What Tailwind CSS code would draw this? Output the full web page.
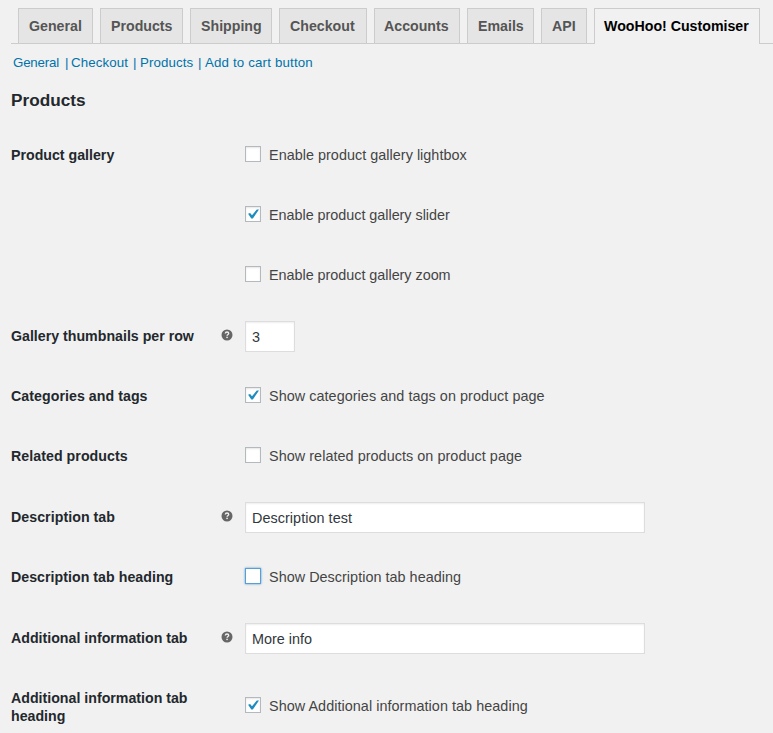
<!DOCTYPE html>
<html lang="en">
<head>
<meta charset="utf-8">
<title>Settings</title>
<script src="https://cdn.jsdelivr.net/npm/@tailwindcss/browser@4"></script>
</head>
<body class="h-[733px] overflow-hidden bg-[#f1f1f1] font-['Liberation_Sans',Arial,sans-serif] text-[14.4px] leading-[21px] text-[#444]">
<svg class="hidden">
  <symbol id="check" viewBox="0 0 14 14"><path d="M2.1 6.7 L4.1 6 L6 8.3 L10.8 2.4 L13 2.6 L6.8 11.6 L5.3 11.6 Z" fill="#1e8cbe"/></symbol>
  <symbol id="help" viewBox="0 0 12 12"><circle cx="6" cy="6" r="5.5" fill="#666"/><path d="M4.3 4.5C4.4 3.4 5.1 3 6 3s1.7.5 1.7 1.4c0 1.1-1.6 1.1-1.6 2.4" fill="none" stroke="#f1f1f1" stroke-width="1.4"/><rect x="5.3" y="7.7" width="1.5" height="1.4" fill="#f1f1f1"/></symbol>
</svg>
<nav class="ml-[11px] flex h-[44px] items-end border-b border-[#ccc] pl-[7px] text-[14.2px] font-bold leading-[34px] whitespace-nowrap text-[#555]">
  <a class="mr-[7px] h-[35px] w-[75px] border border-b-0 border-[#ccc] bg-[#e5e5e5] pl-[10px]">General</a>
  <a class="mr-[7px] h-[35px] w-[83px] border border-b-0 border-[#ccc] bg-[#e5e5e5] pl-[10px]">Products</a>
  <a class="mr-[7px] h-[35px] w-[82px] border border-b-0 border-[#ccc] bg-[#e5e5e5] pl-[10px]">Shipping</a>
  <a class="mr-[7px] h-[35px] w-[88px] border border-b-0 border-[#ccc] bg-[#e5e5e5] pl-[10px]">Checkout</a>
  <a class="mr-[7px] h-[35px] w-[86px] border border-b-0 border-[#ccc] bg-[#e5e5e5] pl-[9px]">Accounts</a>
  <a class="mr-[7px] h-[35px] w-[67px] border border-b-0 border-[#ccc] bg-[#e5e5e5] pl-[10px]">Emails</a>
  <a class="mr-[7px] h-[35px] w-[46px] border border-b-0 border-[#ccc] bg-[#e5e5e5] pl-[10px]">API</a>
  <a class="-mb-px h-[36px] w-[166px] border border-b-0 border-[#ccc] bg-[#f1f1f1] pl-[9px] text-black">WooHoo! Customiser</a>
</nav>
<div class="flex h-[36px] pl-[13px] text-[13.3px] leading-[37px] whitespace-nowrap text-[#0073aa]">
  <a class="w-[52px] tracking-[-0.2px]">General</a><span class="w-[6px]">|</span><a class="w-[62px] tracking-[0.1px]">Checkout</a><span class="w-[7px]">|</span><a class="w-[58px] tracking-[0.1px]">Products</a><span class="w-[7px]">|</span><a class="tracking-[0.16px]">Add to cart button</a>
</div>
<h2 class="h-[45px] pl-[11px] text-[17.2px] font-bold leading-[41px] text-[#23282d]">Products</h2>
<main class="pl-[11px]">
  <div class="flex h-[60px] items-center">
    <div class="w-[234px] text-[14.2px] font-bold text-[#23282d]">Product gallery</div>
    <span class="-mt-[2px] mr-[8px] size-[16px] border border-[#b4b9be] bg-white shadow-[inset_0_1px_2px_rgba(0,0,0,0.1)]"></span><span class="tracking-[0.03px]">Enable product gallery lightbox</span>
  </div>
  <div class="flex h-[60px] items-center pl-[234px]">
    <span class="-mt-[2px] mr-[8px] size-[16px] border border-[#b4b9be] bg-white shadow-[inset_0_1px_2px_rgba(0,0,0,0.1)]"><svg class="size-[14px]"><use href="#check"/></svg></span><span class="tracking-[-0.03px]">Enable product gallery slider</span>
  </div>
  <div class="flex h-[60px] items-center pl-[234px]">
    <span class="-mt-[2px] mr-[8px] size-[16px] border border-[#b4b9be] bg-white shadow-[inset_0_1px_2px_rgba(0,0,0,0.1)]"></span><span class="tracking-[-0.03px]">Enable product gallery zoom</span>
  </div>
  <div class="flex h-[61px] items-center">
    <div class="mt-px w-[210px] text-[14.2px] font-bold text-[#23282d]">Gallery thumbnails per row</div>
    <svg class="-mt-px mr-[12px] size-[12px]"><use href="#help"/></svg>
    <div class="mt-[2px] h-[31px] w-[50px] border border-[#ddd] bg-white pl-[6px] leading-[30px] text-[#32373c] shadow-[inset_0_1px_2px_rgba(0,0,0,0.07)]">3</div>
  </div>
  <div class="flex h-[60px] items-center">
    <div class="w-[234px] text-[14.2px] font-bold tracking-[0.05px] text-[#23282d]">Categories and tags</div>
    <span class="-mt-[2px] mr-[8px] size-[16px] border border-[#b4b9be] bg-white shadow-[inset_0_1px_2px_rgba(0,0,0,0.1)]"><svg class="size-[14px]"><use href="#check"/></svg></span><span class="tracking-[0.05px]">Show categories and tags on product page</span>
  </div>
  <div class="flex h-[60px] items-center">
    <div class="w-[234px] text-[14.2px] font-bold tracking-[0.05px] text-[#23282d]">Related products</div>
    <span class="-mt-[2px] mr-[8px] size-[16px] border border-[#b4b9be] bg-white shadow-[inset_0_1px_2px_rgba(0,0,0,0.1)]"></span><span class="tracking-[0.05px]">Show related products on product page</span>
  </div>
  <div class="flex h-[61px] items-center">
    <div class="mt-px w-[210px] text-[14.2px] font-bold tracking-[0.05px] text-[#23282d]">Description tab</div>
    <svg class="-mt-px mr-[12px] size-[12px]"><use href="#help"/></svg>
    <div class="mt-[2px] h-[31px] w-[400px] border border-[#ddd] bg-white pl-[6px] leading-[30px] tracking-[0.05px] text-[#32373c] shadow-[inset_0_1px_2px_rgba(0,0,0,0.07)]">Description test</div>
  </div>
  <div class="flex h-[60px] items-center">
    <div class="w-[234px] text-[14.2px] font-bold tracking-[0.03px] text-[#23282d]">Description tab heading</div>
    <span class="-mt-[2px] mr-[8px] size-[16px] border border-[#5b9dd9] bg-white shadow-[0_0_2px_rgba(30,140,190,0.8)]"></span><span class="tracking-[0.03px]">Show Description tab heading</span>
  </div>
  <div class="flex h-[61px] items-center">
    <div class="mt-px w-[210px] text-[14.2px] font-bold text-[#23282d]">Additional information tab</div>
    <svg class="-mt-px mr-[12px] size-[12px]"><use href="#help"/></svg>
    <div class="mt-[2px] h-[31px] w-[400px] border border-[#ddd] bg-white pl-[6px] leading-[30px] text-[#32373c] shadow-[inset_0_1px_2px_rgba(0,0,0,0.07)]">More info</div>
  </div>
  <div class="flex h-[76px] items-center">
    <div class="mt-[2px] w-[234px] pr-[40px] text-[14.2px] font-bold leading-[18px] text-[#23282d]">Additional information tab heading</div>
    <span class="-mt-[2px] mr-[8px] size-[16px] border border-[#b4b9be] bg-white shadow-[inset_0_1px_2px_rgba(0,0,0,0.1)]"><svg class="size-[14px]"><use href="#check"/></svg></span><span class="tracking-[0.05px]">Show Additional information tab heading</span>
  </div>
</main>
</body>
</html>
